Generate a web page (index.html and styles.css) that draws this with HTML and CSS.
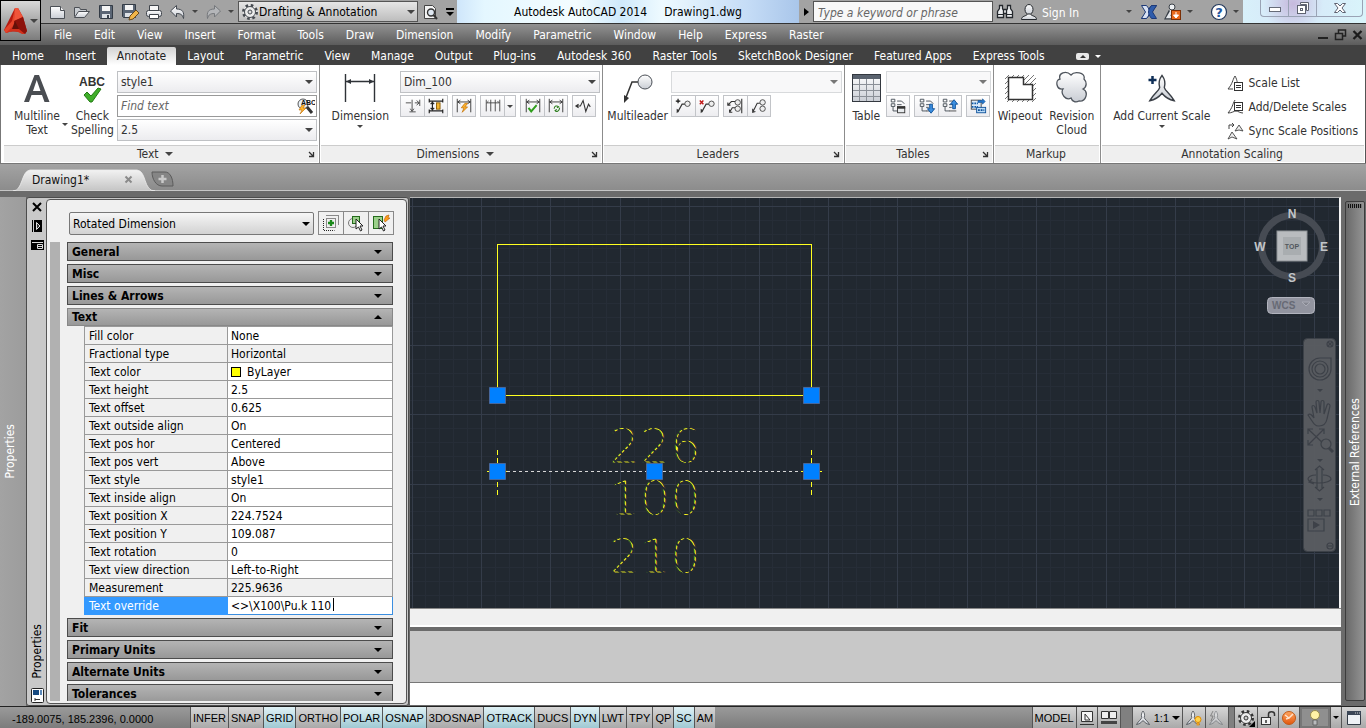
FILE: index.html
```html
<!DOCTYPE html>
<html lang="en">
<head>
<meta charset="utf-8">
<title>Autodesk AutoCAD 2014 - Drawing1.dwg</title>
<link rel="stylesheet" href="styles.css">
</head>
<body>
<svg class="defs" aria-hidden="true">
  <defs>
    <linearGradient id="silver" x1="0" y1="0" x2="0" y2="1"><stop offset="0" stop-color="#fff"/><stop offset="1" stop-color="#c9cdd4"/></linearGradient>
    <linearGradient id="orange" x1="0" y1="0" x2="0" y2="1"><stop offset="0" stop-color="#ffa763"/><stop offset="1" stop-color="#e2560c"/></linearGradient>
    <symbol id="dimbase" viewBox="0 0 20 20"><path d="M2.5 2v15M17.5 2v15M3 5.500h14M6 3.500L3 5.500l3 2M14 3.500l3 2-3 2" fill="none" stroke="#333"/></symbol>
    <symbol id="tree" viewBox="0 0 20 20"><path d="M2.500 2.500h4v3h-4zM2.500 7.500h4v3h-4zM9 4.500h5l3 3M4.500 11v4.500h5M9 8.500h5M9 11.500h3" fill="none" stroke="#444c55"/></symbol>
    <symbol id="scaleman" viewBox="0 0 32 32"><path d="M16 2c3 4 4 8 2.500 13 1 4 6 6 10.500 14-5-1-9-3-13-8-4 5-8 7-13 8 4.500-8 9.500-10 10.500-14C12 10 13 6 16 2z" fill="url(#silver)" stroke="#3a3f46" stroke-width="1.500"/></symbol>
  </defs>
</svg>

<header class="top">
  <button class="app" aria-label="Application menu">
    <svg width="26" height="28" viewBox="0 0 26 28"><path d="M12 1L1 23l2 3c6-2 14-2 19 1l2-3-4-14-5-9z" fill="#b51a10"/><path d="M12 1l-3 13-8 9 2 3 8-3z" fill="#e5432a"/><path d="M12 1l3 0 5 9-9 4z" fill="#f0543a"/><path d="M20 10l4 14-2 3-8-4-3-9z" fill="#8c120b"/><path d="M3 26l8-8 11 9-3 0c-4-3-10-4-16-1z" fill="#d2301c"/><path d="M9 22l3-8 4 8z" fill="#641009"/></svg>
    <i class="tri"></i>
  </button>
  <div class="titlebar">
    <button class="tb" aria-label="New"><svg width="18" height="16" viewBox="0 0 18 16"><path d="M1.500 2.500h10l4 4v8h-14z" fill="url(#silver)" stroke="#4b4f55"/><path d="M11.500 2.500v4h4" fill="#eee" stroke="#4b4f55"/></svg></button>
    <button class="tb" aria-label="Open"><svg width="18" height="16" viewBox="0 0 18 16"><path d="M1.500 12.500v-9h5l1 2h6v2" fill="#c9cdd2" stroke="#4b4f55"/><path d="M1.500 13.500l4-6h11l-5 6z" fill="url(#silver)" stroke="#4b4f55"/></svg></button>
    <button class="tb" aria-label="Save"><svg width="16" height="16" viewBox="0 0 16 16"><path d="M1.500 1.500h13v13h-12l-1-1z" fill="#5b6675" stroke="#333b45"/><path d="M4 2h8v5H4z" fill="#f4f4f4"/><path d="M4 10h8v4H4z" fill="#dde1e6"/><path d="M9 11h2v3H9z" fill="#3a434e"/></svg></button>
    <button class="tb" aria-label="Save as"><svg width="18" height="18" viewBox="0 0 18 18"><path d="M1.500 1.500h13v13h-12l-1-1z" fill="#5b6675" stroke="#333b45"/><path d="M4 2h8v5H4z" fill="#f4f4f4"/><path d="M4 10h8v4H4z" fill="#dde1e6"/><path d="M8 17l1-4 6-6 3 3-6 6z" fill="#f2b64a" stroke="#6a4a1c"/></svg></button>
    <button class="tb" aria-label="Plot"><svg width="18" height="16" viewBox="0 0 18 16"><path d="M4.500 1.500h9v5h-9z" fill="#f6f6f6" stroke="#40454c"/><rect x="1.500" y="6.500" width="15" height="6" rx="2" fill="url(#silver)" stroke="#40454c"/><path d="M4.500 10.500h9v4h-9z" fill="#fff" stroke="#40454c"/></svg></button>
    <button class="tb" aria-label="Undo"><svg width="18" height="16" viewBox="0 0 18 16"><path d="M1.500 7l6-5.500v3.500c6 0 8 3 7 9.500-1-4-3-5-7-5v3.500z" fill="url(#silver)" stroke="#444a52"/></svg></button>
    <button class="tb nar" aria-label="Undo list"><i class="tri s"></i></button>
    <button class="tb wide" aria-label="Redo"><svg width="18" height="16" viewBox="0 0 18 16"><path d="M16.500 7l-6-5.500v3.500c-6 0-8 3-7 9.500 1-4 3-5 7-5v3.500z" fill="#b4b6b9" stroke="#75787c"/></svg></button>
    <button class="tb nar" aria-label="Redo list"><i class="tri s"></i></button>
    <label class="workspace">
      <svg width="18" height="18" viewBox="0 0 18 18"><circle cx="9" cy="9" r="6.500" fill="#fff" stroke="#454a50" stroke-width="3" stroke-dasharray="2.500 2.600"/><circle cx="9" cy="9" r="5.500" fill="#ececec" stroke="#454a50"/><circle cx="9" cy="9" r="2" fill="#ddd" stroke="#454a50"/></svg>
      <select aria-label="Workspace"><option>Drafting &amp; Annotation</option></select><i class="tri"></i>
    </label>
    <button class="tb" aria-label="Plot preview"><svg width="16" height="16" viewBox="0 0 16 16"><path d="M2.500 1.500h8l3 3v10h-11z" fill="#f4f4f4" stroke="#444"/><circle cx="9" cy="8.500" r="3.500" fill="#dfe8f2" stroke="#333" stroke-width="1.400"/><path d="M11.500 11l3.500 4" stroke="#333" stroke-width="2"/></svg></button>
    <button class="tb more" aria-label="Customize"><b></b><i class="tri k"></i></button>
    <h1 class="title">Autodesk AutoCAD 2014&nbsp; &nbsp;&nbsp; Drawing1.dwg</h1>
    <button class="tb play" aria-label="Expand search"><i class="rtri"></i></button>
    <input class="search" type="text" placeholder="Type a keyword or phrase" aria-label="Search">
    <button class="tb" aria-label="Find"><svg width="18" height="18" viewBox="0 0 18 18"><path d="M3.500 2.500h3v3l1 2v7h-6v-6l2-3zM11.500 2.500h3v3l2 3v6h-6v-7l1-2zM7.500 6.500h3v4h-3z" fill="#eceef0" stroke="#24282d" stroke-width="1.300"/><path d="M1.500 11.500h6M10.500 11.500h6" stroke="#24282d"/></svg></button>
    <button class="tb" aria-label="Account"><svg width="18" height="18" viewBox="0 0 18 18"><ellipse cx="9" cy="6.500" rx="4" ry="5" fill="url(#silver)" stroke="#24282d"/><path d="M1.500 16.500c0-4 5-3 6-5.500h3c1 2.500 6 1.500 6 5.500z" fill="url(#silver)" stroke="#24282d"/></svg></button>
    <button class="signin">Sign In</button>
    <button class="tb nar" aria-label="Account menu"><i class="tri s"></i></button>
    <button class="tb" aria-label="Exchange Apps"><svg width="18" height="16" viewBox="0 0 18 16"><path d="M16.500 1.500h-5l-10 13h5z" fill="#2f5cab" stroke="#1e3a77"/><path d="M1.500 1.500h5c2 2.500 3 4.500 3 6.500s-1 4-3 6.500h-5L5.500 8z" fill="#d9e2f2" stroke="#1e3a77"/><path d="M16.500 1.500h-5C9.500 4 8.500 6 8.500 8s1 4 3 6.500h5L12.500 8z" fill="#2f5cab" stroke="#1e3a77"/></svg></button>
    <button class="tb" aria-label="Autodesk 360"><svg width="18" height="18" viewBox="0 0 18 18"><path d="M7 8L4 14h6" fill="none" stroke="#3a4048" stroke-width="5"/><path d="M7 5v4L4 14h6" fill="none" stroke="#e6e9ed" stroke-width="2.500"/><circle cx="8" cy="4" r="3" fill="#eef1f4" stroke="#3a4048"/><rect x="7.500" y="7.500" width="9" height="9" fill="#e8671a" stroke="#7a2f06"/><path d="M12 9v4M9.500 12h5L12 15z" fill="#fff" stroke="#fff"/></svg></button>
    <button class="tb nar" aria-label="Autodesk 360 menu"><i class="tri s"></i></button>
    <button class="tb help" aria-label="Help"><svg width="18" height="18" viewBox="0 0 18 18"><circle cx="9" cy="9" r="7.500" fill="#fff" stroke="#23395c" stroke-width="1.200"/><text x="9" y="13.500" text-anchor="middle" font-size="13" font-weight="bold" font-family="DejaVu Sans" fill="#23569e">?</text></svg></button>
    <button class="tb nar" aria-label="Help menu"><i class="tri s"></i></button>
    <div class="winctl">
      <button aria-label="Minimize"><svg width="14" height="12" viewBox="0 0 14 12"><rect x="1.500" y="5.500" width="11" height="4" fill="#fff" stroke="#666b78"/></svg></button>
      <button aria-label="Restore"><svg width="14" height="14" viewBox="0 0 14 14"><path d="M4.500 1.500h8v8h-2v-6h-6z" fill="#fff" stroke="#5e6270"/><rect x="1.500" y="4.500" width="8" height="8" fill="#fff" stroke="#5e6270"/><rect x="4.500" y="7.500" width="2" height="2" fill="none" stroke="#5e6270"/></svg></button>
      <button class="x" aria-label="Close"><svg width="14" height="12" viewBox="0 0 14 12"><path d="M1.500 1.500h3L7 4l2.500-2.500h3L9 6l3.500 4.500h-3L7 8l-2.500 2.500h-3L5 6z" fill="#fff" stroke="#5e6270"/></svg></button>
    </div>
  </div>
  <nav class="menubar">
    <button>File</button><button>Edit</button><button>View</button><button>Insert</button><button>Format</button><button>Tools</button><button>Draw</button><button>Dimension</button><button>Modify</button><button>Parametric</button><button>Window</button><button>Help</button><button>Express</button><button>Raster</button>
    <span class="docctl">
      <svg width="12" height="12" viewBox="0 0 12 12"><path d="M1 9h10" stroke="#222" stroke-width="2"/></svg>
      <svg width="13" height="12" viewBox="0 0 13 12"><path d="M4.500 4v-3h7v6h-3M1.500 4.500h7v6h-7z" fill="none" stroke="#222" stroke-width="1.500"/></svg>
      <svg width="11" height="12" viewBox="0 0 11 12"><path d="M1.500 2l8 8M9.500 2l-8 8" stroke="#1c1c1c" stroke-width="2.300"/></svg>
    </span>
  </nav>
</header>

<nav class="tabs">
  <button>Home</button><button>Insert</button><button class="on">Annotate</button><button>Layout</button><button>Parametric</button><button>View</button><button>Manage</button><button>Output</button><button>Plug-ins</button><button>Autodesk 360</button><button>Raster Tools</button><button>SketchBook Designer</button><button>Featured Apps</button><button>Express Tools</button>
  <button class="mini" aria-label="Minimize ribbon"><span></span><i class="tri s w"></i></button>
</nav>

<section class="ribbon">
  <div class="panel p-text">
    <div class="body">
      <button class="big"><svg width="28" height="34" viewBox="0 0 28 34"><path d="M1 31L11.500 4h4.500L26.500 31h-5L19 24H8.500L6 31zM10 20h7.500L13.700 9z" fill="#4a4d52"/></svg><span>Multiline<br>Text</span></button>
      <i class="tri s side"></i>
      <button class="big"><svg width="32" height="34" viewBox="0 0 32 34"><text x="16" y="15" text-anchor="middle" font-family="Liberation Sans" font-weight="bold" font-size="12" fill="#333">ABC</text><path d="M8 24l3-3 4 4 7-8 3 1-9 13h-2z" fill="#3fae29" stroke="#237a14"/></svg><span>Check<br>Spelling</span></button>
      <div class="stack">
        <label class="field"><select aria-label="Text style"><option>style1</option></select><i class="tri"></i></label>
        <label class="field find"><input type="text" placeholder="Find text" aria-label="Find text"><svg width="18" height="18" viewBox="0 0 18 18"><circle cx="6" cy="7" r="5" fill="#e9f1f8" stroke="#555"/><path d="M10 10l5 6" stroke="#333" stroke-width="3"/><path d="M5 8l-3 5h3l-2 4 6-6H6l2-3z" fill="#ffb52e" stroke="#c06c00" stroke-width=".6"/><text x="4" y="8" font-family="Liberation Sans" font-weight="bold" font-size="7" fill="#111">ABC</text></svg></label>
        <label class="field"><select aria-label="Text height"><option>2.5</option></select><i class="tri"></i></label>
      </div>
    </div>
    <div class="foot">Text <i class="tri"></i><svg class="launch" viewBox="0 0 7 7"><path d="M1 1l4 4M5.500 1v4.500H1" fill="none" stroke="#333" stroke-width="1.300"/></svg></div>
  </div>
  <div class="panel p-dim">
    <div class="body">
      <button class="big"><svg width="34" height="34" viewBox="0 0 34 34"><path d="M2.500 3v28M31.500 3v28M3 10.500h28" stroke="#2f3338" stroke-width="1.400"/><path d="M3 10.500l5-2.500v5zM31 10.500L26 8v5z" fill="#2f3338"/></svg><span>Dimension</span><i class="tri s"></i></button>
      <div class="stack">
        <label class="field"><select aria-label="Dimension style"><option>Dim_100</option></select><i class="tri"></i></label>
        <div class="tools">
          <span><button aria-label="Break"><svg viewBox="0 0 20 20"><path d="M2 6.500h6M9 3v12M12 6.500h5M17.500 3v7M6 16.500h7M7 13l2 3 2-3M14 4l3 2.500-3 2.500" fill="none" stroke="#444"/></svg></button><button aria-label="Adjust space"><svg viewBox="0 0 20 20"><path d="M2.500 2v4M17.500 2v4M2.500 14v4M17.500 14v4M3 4.500h14M3 15.500h14M6 6.500v7M4 8l2-2 2 2M4 12l2 2 2-2" fill="none" stroke="#222" stroke-width="1.300"/><rect x="10.500" y="6.500" width="4" height="7" fill="#f4b52e" stroke="#8a5a00"/></svg></button></span>
          <span><button aria-label="Quick dimension"><svg viewBox="0 0 20 20"><use href="#dimbase"/><path d="M11 7l-4 5h3l-2 5 6-6h-3l3-4z" fill="#ffb52e" stroke="#c06c00" stroke-width=".8"/></svg></button></span>
          <span><button aria-label="Continue"><svg viewBox="0 0 20 20"><path d="M2.500 3v13M7.500 3v13M12.500 3v13M17.500 3v13M3 6.500h14M3 6.500l2-2M17 6.500l-2-2" stroke="#444" fill="none"/></svg></button><button class="drop" aria-label="Continue options"><i class="tri s"></i></button></span>
          <span><button aria-label="Inspect"><svg viewBox="0 0 20 20"><use href="#dimbase"/><path d="M5 12l3 4 6-7" fill="none" stroke="#2f9e1c" stroke-width="2.200"/></svg></button><button aria-label="Update"><svg viewBox="0 0 20 20"><use href="#dimbase"/><path d="M8 13c0-3 3-4 5-2l-2 1M14 12c0 4-4 5-5 3l2-1" fill="none" stroke="#2b7d1c" stroke-width="1.200"/></svg></button></span>
          <span><button aria-label="Jogged"><svg viewBox="0 0 20 20"><path d="M2 10h4l3-6 3 12 3-8 2 3M4 8l-3 2 3 2" fill="none" stroke="#333" stroke-width="1.200"/></svg></button></span>
        </div>
      </div>
    </div>
    <div class="foot">Dimensions <i class="tri"></i><svg class="launch" viewBox="0 0 7 7"><path d="M1 1l4 4M5.500 1v4.500H1" fill="none" stroke="#333" stroke-width="1.300"/></svg></div>
  </div>
  <div class="panel p-lead">
    <div class="body">
      <button class="big"><svg width="34" height="34" viewBox="0 0 34 34"><path d="M4 29l7-18h6" fill="none" stroke="#333" stroke-width="1.500"/><path d="M3 32l0-8 5 3z" fill="#333"/><circle cx="24" cy="11" r="7" fill="url(#silver)" stroke="#4a4f56"/></svg><span>Multileader</span></button>
      <div class="stack">
        <label class="field pale"><select aria-label="Multileader style"><option></option></select><i class="tri"></i></label>
        <div class="tools">
          <span><button aria-label="Add leader"><svg viewBox="0 0 20 20"><path d="M4 17l5-9h4" fill="none" stroke="#333" stroke-width="1.300"/><path d="M3 18v-5l3 2z" fill="#333"/><circle cx="15" cy="7.500" r="3" fill="#eee" stroke="#444"/><path d="M4.500 2v5M2 4.500h5" stroke="#111" stroke-width="1.300"/></svg></button><button aria-label="Remove leader"><svg viewBox="0 0 20 20"><path d="M4 17l5-9h4" fill="none" stroke="#333" stroke-width="1.300"/><path d="M3 18v-5l3 2z" fill="#333"/><circle cx="15" cy="7.500" r="3" fill="#eee" stroke="#444"/><path d="M2 4l4 4M6 4l-4 4" stroke="#c01818" stroke-width="1.600"/></svg></button></span>
          <span><button aria-label="Align"><svg viewBox="0 0 20 20"><path d="M17.500 2v16M2 9l4-4h4M4 17l3-5h3M2 6v3h3M4 14v3h3" fill="none" stroke="#333" stroke-width="1.200"/><circle cx="13" cy="6" r="3" fill="#eee" stroke="#444"/><circle cx="13" cy="13" r="3" fill="#eee" stroke="#444"/></svg></button><button aria-label="Collect"><svg viewBox="0 0 20 20"><path d="M3 17l5-10h3M3 13v4l3-1" fill="none" stroke="#333" stroke-width="1.200"/><circle cx="14" cy="6" r="3" fill="#eee" stroke="#444"/><circle cx="14" cy="13" r="3" fill="#eee" stroke="#444"/></svg></button></span>
        </div>
      </div>
    </div>
    <div class="foot">Leaders<svg class="launch" viewBox="0 0 7 7"><path d="M1 1l4 4M5.500 1v4.500H1" fill="none" stroke="#333" stroke-width="1.300"/></svg></div>
  </div>
  <div class="panel p-tab">
    <div class="body">
      <button class="big"><svg width="32" height="34" viewBox="0 0 32 34"><rect x="2.500" y="3.500" width="28" height="27" fill="url(#silver)" stroke="#33383f"/><path d="M2 3h29v5H2z" fill="#59626e"/><path d="M9.500 8v22M16.500 8v22M23.500 8v22M3 13.500h27M3 19.500h27M3 25.500h27" stroke="#8b9097"/><rect x="2.500" y="3.500" width="28" height="27" fill="none" stroke="#33383f"/></svg><span>Table</span></button>
      <div class="stack">
        <label class="field pale"><select aria-label="Table style"><option></option></select><i class="tri"></i></label>
        <div class="tools">
          <span><button aria-label="Link data"><svg viewBox="0 0 20 20"><use href="#tree"/><rect x="9.500" y="10.500" width="8" height="7" fill="#e8ebee" stroke="#333"/><path d="M9 12h9" stroke="#333" stroke-width="2"/></svg></button></span>
          <span><button aria-label="Download"><svg viewBox="0 0 20 20"><use href="#tree"/><path d="M9 15.500h5" stroke="#444"/><path d="M13 8h3v5h2.500l-4 5-4-5H13z" fill="#3d8fe0" stroke="#0b4f99"/></svg></button><button aria-label="Upload"><svg viewBox="0 0 20 20"><use href="#tree"/><path d="M9 15.500h8" stroke="#444"/><path d="M13 13V8h-2.500l4-5 4 5H16v5z" fill="#3d8fe0" stroke="#0b4f99"/></svg></button></span>
          <span><button aria-label="Extract data"><svg viewBox="0 0 20 20"><rect x="2.500" y="3.500" width="11" height="10" fill="#dcebf9" stroke="#444"/><path d="M3 7h7M3 11h7" stroke="#0e5aa7" stroke-width="2" stroke-dasharray="2 1"/><path d="M10 4h5V2l3 3-3 3V6h-5z" fill="#2679cf" stroke="#0b4f99" stroke-width=".7"/><rect x="8.500" y="11.500" width="10" height="6" fill="#bcdcf7" stroke="#0b4f99"/><path d="M10 14.500h7" stroke="#0b4f99" stroke-width="2" stroke-dasharray="2 1"/></svg></button></span>
        </div>
      </div>
    </div>
    <div class="foot">Tables<svg class="launch" viewBox="0 0 7 7"><path d="M1 1l4 4M5.500 1v4.500H1" fill="none" stroke="#333" stroke-width="1.300"/></svg></div>
  </div>
  <div class="panel p-mark">
    <div class="body">
      <button class="big"><svg width="34" height="34" viewBox="0 0 34 34"><path d="M2 8l4-4M2 13l9-9M2 18L16 4M2 23L21 4M2 28L26 4M4 31L31 4M9 31L33 7M14 31l19-19M19 31l14-14M24 31l9-9M29 31l4-4" stroke="#777"/><path d="M5.500 6.500h15v7h9v15h-24z" fill="#fff" stroke="#333" stroke-width="1.500"/></svg><span>Wipeout</span></button>
      <button class="big"><svg width="34" height="34" viewBox="0 0 34 34"><path d="M8 18C1 19 0 9 5 8 3 2 11-1 16 4c3-4 15-3 13 4 3 3 3 8-1 10 6 3 3 13-4 12-4 2-7 0-8-3-5 3-11-4-8-9z" fill="url(#silver)" stroke="#50565e" stroke-width="1.300"/></svg><span>Revision<br>Cloud</span></button>
    </div>
    <div class="foot">Markup</div>
  </div>
  <div class="panel p-anno">
    <div class="body">
      <button class="big"><svg width="34" height="34" viewBox="0 0 34 34"><use href="#scaleman" x="2" y="2" width="30" height="31"/><path d="M7.500 5v8M3.500 9h8" stroke="#0f2f57" stroke-width="2.500"/></svg><span>Add Current Scale</span><i class="tri s"></i></button>
      <div class="list">
        <button><svg width="17" height="17" viewBox="0 0 17 17"><path d="M8 1c3 5 1 7 5 9M8 1C5 6 6 8 1 14h5" fill="none" stroke="#444"/><rect x="7.500" y="7.500" width="8" height="8" fill="#fff" stroke="#333"/><path d="M9 10.500h5M9 12.500h5" stroke="#333"/></svg>Scale List</button>
        <button><svg width="17" height="17" viewBox="0 0 17 17"><path d="M8 1C5 6 6 8 1 14c4 0 6-2 8-2s4 2 7 2" fill="none" stroke="#444"/><rect x="7.500" y="3.500" width="8" height="8" fill="#fff" stroke="#333"/><path d="M9 6.500h5M9 8.500h5" stroke="#333"/></svg>Add/Delete Scales</button>
        <button><svg width="17" height="17" viewBox="0 0 17 17"><path d="M12 2l-4 6 4-1 4 1zM5 9l-4 7 4-2 5 2z" fill="#eee" stroke="#444" stroke-width=".9"/><path d="M2 6V2h5M5 0l2 2-2 2" fill="none" stroke="#444"/></svg>Sync Scale Positions</button>
      </div>
    </div>
    <div class="foot">Annotation Scaling</div>
  </div>
</section>

<div class="filetabs">
  <svg width="180" height="26" viewBox="0 0 180 26"><defs><linearGradient id="tabg" x1="0" y1="0" x2="0" y2="1"><stop offset="0" stop-color="#f2f2f2"/><stop offset="1" stop-color="#c4c4c4"/></linearGradient></defs><path d="M13 26c10 0 8-20 17-21h107c10 1 6 21 18 21z" fill="url(#tabg)" stroke="#eee" stroke-width=".8"/><path d="M152 7h13c5 0 8 6 8 14h-11c-6 0-10-7-10-14z" fill="#858585" stroke="#5c5c5c"/><path d="M162.500 10v8M158.500 14h8" stroke="#c9c9c9" stroke-width="2.500"/></svg>
  <a href="#d1">Drawing1*</a>
  <button aria-label="Close drawing"><svg width="9" height="9" viewBox="0 0 9 9"><path d="M1.500 1.500l6 6M7.500 1.500l-6 6" stroke="#8a8a8a" stroke-width="2"/></svg></button>
</div>

<main class="main">
  <aside class="dock-left"><span>Properties</span></aside>
  <aside class="palette">
    <div class="grip">
      <svg width="12" height="12" viewBox="0 0 12 12"><path d="M2 2l8 8M10 2l-8 8" stroke="#000" stroke-width="2"/></svg>
      <svg width="12" height="12" viewBox="0 0 12 12"><path d="M1 0h1v12H1zM3 0h8v12H3z"/><path d="M5.500 2.500v7l3.500-3.500z" fill="#333" stroke="#ddd"/></svg>
      <svg width="13" height="12" viewBox="0 0 13 12"><path d="M0 1h13v10H0z"/><path d="M1 3.500h11M6.500 5.500h5v4h-5zM7 7.500h4" fill="none" stroke="#ddd"/></svg>
      <span>Properties</span>
      <svg width="13" height="15" viewBox="0 0 13 15"><rect x=".5" y=".5" width="12" height="14" rx="1" fill="#fff" stroke="#222"/><path d="M2 2h6v5H2z" fill="#174a80"/><path d="M9 2h2v5H9z" fill="#5b89ba"/><path d="M4 11.500h5M4 10v3" stroke="#333"/></svg>
    </div>
    <div class="sheet">
      <div class="pick">
        <label class="objsel"><select aria-label="Object type"><option>Rotated Dimension</option></select><i class="tri k"></i></label>
        <div class="picks">
          <button aria-label="Toggle PICKADD"><svg width="18" height="18" viewBox="0 0 18 18"><path d="M4.500 1.500h12v10M1.500 5v11.500h11M4.500 4.500h9v9h-9z" fill="none" stroke="#222" stroke-dasharray="1 1"/><path d="M9 6v6M6 9h6" stroke="#1b8a1b" stroke-width="2.300"/></svg></button>
          <button aria-label="Select objects"><svg width="18" height="18" viewBox="0 0 18 18"><circle cx="6" cy="9" r="4.500" fill="none" stroke="#777"/><rect x="5.500" y="2.500" width="7" height="7" fill="#9bd08a" stroke="#246b1c"/><path d="M9 5v10l2.500-2 2 4 1.500-1-2-4h3z" fill="#fff" stroke="#222"/></svg></button>
          <button aria-label="Quick select"><svg width="18" height="18" viewBox="0 0 18 18"><rect x="1.500" y="2.500" width="9" height="12" fill="#9bd08a" stroke="#246b1c"/><path d="M12 6l2-4 3-1-1 3h2l-5 4z" fill="#ff9d1c" stroke="#b35c00" stroke-width=".6"/><path d="M7 5v10l2.500-2 2 4 1.500-1-2-4h3z" fill="#fff" stroke="#222"/></svg></button>
        </div>
      </div>
      <div class="props">
        <div class="scroll"></div>
        <div class="cats">
          <button class="cat">General<i class="tri k"></i></button>
          <button class="cat">Misc<i class="tri k"></i></button>
          <button class="cat">Lines &amp; Arrows<i class="tri k"></i></button>
          <div class="group">
            <button class="cat open">Text<i class="tri up"></i></button>
            <table>
              <tr><th>Fill color</th><td>None</td></tr>
              <tr class="ro"><th>Fractional type</th><td>Horizontal</td></tr>
              <tr><th>Text color</th><td><b class="sw"></b>ByLayer</td></tr>
              <tr><th>Text height</th><td>2.5</td></tr>
              <tr><th>Text offset</th><td>0.625</td></tr>
              <tr><th>Text outside align</th><td>On</td></tr>
              <tr><th>Text pos hor</th><td>Centered</td></tr>
              <tr><th>Text pos vert</th><td>Above</td></tr>
              <tr><th>Text style</th><td>style1</td></tr>
              <tr><th>Text inside align</th><td>On</td></tr>
              <tr><th>Text position X</th><td>224.7524</td></tr>
              <tr><th>Text position Y</th><td>109.087</td></tr>
              <tr><th>Text rotation</th><td>0</td></tr>
              <tr><th>Text view direction</th><td>Left-to-Right</td></tr>
              <tr class="ro"><th>Measurement</th><td>225.9636</td></tr>
              <tr class="sel"><th><label for="ovr">Text override</label></th><td><input id="ovr" type="text" value="&lt;&gt;\X100\Pu.k 110"><i class="caret"></i></td></tr>
            </table>
          </div>
          <button class="cat">Fit<i class="tri k"></i></button>
          <button class="cat">Primary Units<i class="tri k"></i></button>
          <button class="cat">Alternate Units<i class="tri k"></i></button>
          <button class="cat">Tolerances<i class="tri k"></i></button>
        </div>
      </div>
    </div>
  </aside>
  <div class="work">
    <div class="canvas" id="d1">
      <svg class="drawing" width="100%" height="100%">
        <defs>
          <pattern id="grid" patternUnits="userSpaceOnUse" x="71" y="8" width="347" height="347">
            <path d="M14.500 0v347M28.500 0v347M42.500 0v347M56.500 0v347M83.500 0v347M97.500 0v347M111.500 0v347M125.500 0v347M153.500 0v347M167.500 0v347M180.500 0v347M194.500 0v347M222.500 0v347M236.500 0v347M250.500 0v347M264.500 0v347M291.500 0v347M305.500 0v347M319.500 0v347M333.500 0v347M0 14.500h347M0 28.500h347M0 42.500h347M0 56.500h347M0 83.500h347M0 97.500h347M0 111.500h347M0 125.500h347M0 153.500h347M0 167.500h347M0 180.500h347M0 194.500h347M0 222.500h347M0 236.500h347M0 250.500h347M0 264.500h347M0 291.500h347M0 305.500h347M0 319.500h347M0 333.500h347" stroke="#262d37"/>
            <path d="M.5 0v347M69.500 0v347M139.500 0v347M208.500 0v347M278.500 0v347M0 .5h347M0 69.500h347M0 139.500h347M0 208.500h347M0 278.500h347" stroke="#343c49"/>
          </pattern>
          <pattern id="dash" patternUnits="userSpaceOnUse" width="5" height="5" patternTransform="rotate(-45)"><rect width="3" height="5" fill="#ffff20"/></pattern>
        </defs>
        <rect width="100%" height="100%" fill="#212830"/>
        <rect width="100%" height="100%" fill="url(#grid)"/>
        <rect x="87.500" y="46.500" width="314" height="151" fill="none" stroke="#ffff20"/>
        <path d="M87.500 252v45M401.500 252v45" stroke="#ffff20" stroke-dasharray="5 3"/>
        <path d="M77 273.500h20M391 273.500h22" stroke="#ffff20" stroke-dasharray="5 3"/>
        <path d="M97 273.500h294" stroke="#d8d8d8" stroke-dasharray="3 3"/>
        <g class="dimtext"><text x="245" y="265">226</text><text x="245" y="317">100</text><text x="245" y="375">210</text></g>
        <g fill="#0080ff" stroke="#47679b"><path d="M79.500 189.500h16v16h-16zM393.500 189.500h16v16h-16zM79.500 265.500h16v16h-16zM236.500 265.500h16v16h-16zM393.500 265.500h16v16h-16z"/></g>
      </svg>
      <svg class="cube" width="80" height="110" viewBox="0 0 80 110">
        <circle cx="40" cy="40" r="30.500" fill="none" stroke="#464b53" stroke-width="7"/>
        <g font-family="Liberation Sans" font-weight="bold" font-size="12" fill="#c3c6c9" text-anchor="middle"><text x="40" y="12">N</text><text x="72" y="45">E</text><text x="40" y="76">S</text><text x="8" y="45">W</text></g>
        <rect x="25" y="25" width="30" height="30" fill="#b9bcbf" stroke="#8f9397"/><rect x="31" y="31" width="18" height="18" fill="#a9adb0"/>
        <text x="40" y="43" text-anchor="middle" font-family="Liberation Sans" font-weight="bold" font-size="7" fill="#52575d">TOP</text>
        <rect x="15.500" y="91.500" width="47" height="16" rx="4" fill="#92949f" stroke="#b2b4be"/>
        <text x="20" y="103" font-family="Liberation Sans" font-weight="bold" font-size="10" fill="#676a75">WCS</text>
        <path d="M50 96h8l-4 4z" fill="#83858f" stroke="#a9abb5"/>
      </svg>
      <svg class="nav" width="33" height="214" viewBox="0 0 33 214">
        <rect x=".5" y=".5" width="32" height="213" rx="4" fill="#5a5d62" stroke="#3e434a"/>
        <g fill="none" stroke="#3f434a" stroke-width="1.200">
          <circle cx="27" cy="6" r="3"/><path d="M25 4l4 4M29 4l-4 4"/>
          <path d="M6 31c0-6 5-11 11-11h11v11a11 11 0 0 1-22 0z"/><circle cx="17" cy="31" r="5"/><circle cx="17" cy="31" r="8"/>
          <path d="M5 77c2-2 4 0 6 3l-2-11c0-2 2-2 3 0l2 6-1-11c0-2 3-2 3 0l1 11 1-11c0-2 3-2 3 0v12l3-9c1-2 3-1 3 1l-3 13c-1 5-4 7-8 7-5 0-6-4-11-11z"/>
          <path d="M5 91l18 17M21 91L5 107M5 96v-5h5M16 91h5v5M5 102v5h5"/><circle cx="23" cy="106" r="5" fill="#5a5d62"/><path d="M26 110l4 4" stroke-width="3"/>
          <path d="M14 131v19M19 131v19M12 132l4.500-4 4.500 4M12 149l4.500 4 4.500-4"/><path d="M20 137c5 0 8 2 8 4s-5 4-12 4-11-2-11-4 3-4 8-4M9 141l-3 3 5 2"/>
          <path d="M5 172h6v6H5zM13 172h6v6h-6zM21 172h6v6h-6zM5 181h16v12H5z"/><circle cx="27" cy="208" r="3"/><path d="M25 208h4"/>
        </g>
        <path d="M10 183v8l7-4zM14 51h6l-3 3zM14 121h6l-3 3zM14 160h6l-3 3z" fill="#3f434a"/>
      </svg>
    </div>
    <div class="layoutbar"></div>
    <div class="history"></div>
    <div class="cmd"><input type="text" aria-label="Command line"></div>
  </div>
  <aside class="dock-right"><i></i><span>External References</span></aside>
</main>

<footer class="status">
  <output>-189.0075, 185.2396, 0.0000</output>
  <div class="toggles">
    <button>INFER</button><button>SNAP</button><button class="on">GRID</button><button>ORTHO</button><button class="on">POLAR</button><button class="on">OSNAP</button><button>3DOSNAP</button><button class="on">OTRACK</button><button>DUCS</button><button class="on">DYN</button><button>LWT</button><button>TPY</button><button>QP</button><button class="on">SC</button><button>AM</button>
  </div>
  <div class="right">
    <button>MODEL</button>
    <button aria-label="Quick view layouts"><svg width="16" height="16" viewBox="0 0 16 16"><path d="M2.500 1.500h11v10h-11z" fill="#f4f4f4" stroke="#333"/><path d="M1 14.500h14M6 4v6h5z" fill="none" stroke="#333"/></svg></button>
    <button aria-label="Quick view drawings"><svg width="18" height="16" viewBox="0 0 18 16"><path d="M1.500 1.500h7v7h-7zM9.500 1.500h7v7h-7z" fill="#eee" stroke="#333"/><path d="M1 12.500h16" stroke="#444" stroke-width="3"/></svg></button>
    <i class="gap"></i>
    <button class="scale"><svg width="16" height="16" viewBox="0 0 32 32"><use href="#scaleman"/></svg>1:1<i class="tri k"></i></button>
    <button aria-label="Annotation visibility"><svg width="18" height="16" viewBox="0 0 36 32"><use href="#scaleman" width="32" height="32"/><circle cx="26" cy="19" r="6" fill="#ffd24a" stroke="#e08a00" stroke-width="2"/><path d="M23 26h6v5h-6z" fill="#e79b21"/></svg></button>
    <button aria-label="Auto scale"><svg width="18" height="16" viewBox="0 0 36 32" opacity=".5"><use href="#scaleman" width="32" height="32"/><path d="M10 2L5 12h5L6 22" fill="none" stroke="#444" stroke-width="2"/></svg></button>
    <i class="gap sm"></i>
    <button aria-label="Workspace switching"><svg width="18" height="18" viewBox="0 0 18 18"><circle cx="9" cy="9" r="6.500" fill="#fff" stroke="#333" stroke-width="3" stroke-dasharray="2.500 2.600"/><circle cx="9" cy="9" r="5.500" fill="#ececec" stroke="#333"/><circle cx="9" cy="9" r="2" fill="#ccc" stroke="#333"/><path d="M18 12v6h-6z"/></svg></button>
    <button aria-label="Lock UI"><svg width="16" height="16" viewBox="0 0 16 16"><path d="M8.500 7V4c0-3 6-3 6 0v2" fill="none" stroke="#333" stroke-width="1.500"/><rect x="1.500" y="7.500" width="9" height="7" fill="#f2f2f2" stroke="#333"/><path d="M6 10v3" stroke="#333" stroke-width="1.500"/></svg></button>
    <button aria-label="Performance"><svg width="16" height="16" viewBox="0 0 16 16"><circle cx="8" cy="8" r="6.500" fill="url(#orange)" stroke="#c05a18"/><path d="M4 5l4 3 4-4M5 9l3-1" stroke="#ffe2cc" stroke-width="1.500" fill="none"/></svg></button>
    <button class="bulb" aria-label="Isolate objects"><svg width="22" height="17" viewBox="0 0 22 17"><circle cx="11" cy="6" r="4.500" fill="#fff3a6" stroke="#9a8e4e"/><path d="M9 11h4v5H9z" fill="#b9bbbd" stroke="#555" stroke-width=".8"/></svg></button>
    <button class="menu" aria-label="Status menu"><i class="tri s k"></i></button>
    <button aria-label="Clean screen"><svg width="16" height="16" viewBox="0 0 16 16"><path d="M1.500 1.500h13v13h-13z" fill="#eef1f5" stroke="#333b46"/><path d="M1 1h14v4H1z" fill="#3b4656"/><path d="M9 3h5" stroke="#ccc" stroke-dasharray="1 1"/></svg></button>
  </div>
</footer>
</body>
</html>
```

FILE: styles.css
```css
* { box-sizing: border-box; }
html, body { height: 100%; }
body {
  margin: 0;
  display: flex;
  flex-direction: column;
  overflow: hidden;
  background: #6b6b6b;
  color: #000;
  font: 12px/14px "DejaVu Sans Condensed", "Noto Sans", sans-serif;
}
button, input, select {
  margin: 0;
  padding: 0;
  border: 0;
  border-radius: 0;
  background: none;
  color: inherit;
  font: inherit;
  appearance: none;
  outline: none;
}
svg { display: block; flex: none; }
.defs { position: absolute; width: 0; height: 0; }

.tri {
  flex: none;
  width: 0;
  height: 0;
  border: 4px solid transparent;
  border-top-color: #444;
  border-bottom: 0;
}
.tri.s { border-width: 3px 3px 0; }
.tri.k { border-top-color: #000; }
.tri.w { border-top-color: #fff; }
.tri.up { border: 4px solid transparent; border-top: 0; border-bottom-color: #000; }
.rtri { border: 4px solid transparent; border-left: 5px solid #000; border-right: 0; }

/* title and menu */
.top {
  flex: none;
  display: grid;
  grid-template: 24px 21px / 46px 1fr;
  background: linear-gradient(#a3a3a3 0 23px, #333 23px 24px, #929292 24px, #5c5c5c 45px);
}
.app {
  grid-row: 1 / 3;
  width: 41px;
  height: 41px;
  display: flex;
  align-items: center;
  justify-content: center;
  gap: 1px;
  border: 1px solid #000;
  background: linear-gradient(#d8d8d8, #7c7c7c);
}
.titlebar { display: flex; align-items: center; height: 23px; min-width: 0; }
.tb { width: 24px; height: 22px; flex: none; display: flex; align-items: center; justify-content: center; }
.tb.nar { width: 10px; }
.tb.wide { width: 26px; }
.tb.more { width: 15px; flex-direction: column; gap: 2px; }
.tb.more b { width: 8px; height: 2px; background: #000; }
.tb.play { width: 14px; }
.tb.help { margin-left: 12px; }
.workspace {
  position: relative;
  flex: none;
  display: flex;
  align-items: center;
  width: 180px;
  height: 21px;
  margin-left: 2px;
  padding-left: 2px;
  border: 1px solid #555;
  background: linear-gradient(#e6e6e6, #bdbdbd);
}
.workspace select { flex: 1; height: 19px; }
.workspace .tri { position: absolute; right: 2px; top: 8px; pointer-events: none; }
.title {
  flex: 1;
  height: 23px;
  margin: 0;
  text-align: center;
  font: inherit;
  line-height: 25px;
  white-space: pre;
  background: linear-gradient(90deg, #cfe6fb, #e4f7ff 8%, #f4fdff 35%, #cfe9fb 48%, #eefaff 60%, #c5dcf6 85%, #a9c6ea);
}
.search {
  width: 180px;
  height: 21px;
  padding: 2px 0 0 4px;
  border: 1px solid #555;
  background: #f8f8f8;
}
.search::placeholder, .find input::placeholder { color: #666; font-style: italic; opacity: 1; }
.signin { width: 83px; text-align: left; color: #fff; padding: 2px 0 0 1px; }
.signin + .tb { margin-right: 3px; }
.winctl {
  flex: none;
  display: flex;
  width: 123px;
  height: 23px;
  margin-left: 2px;
  padding: 0 3px 6px 17px;
  background: radial-gradient(circle at 50px 4px, #c6b9dd, #d7ecf9 30px, #d9f5fb);
}
.winctl button {
  width: 28px;
  display: flex;
  align-items: center;
  justify-content: center;
  border: 1px solid #9aa3b5;
  border-top: 0;
  border-right: 0;
}
.winctl .x { width: 47px; border-right: 1px solid #9aa3b5; border-radius: 0 0 4px 0; }
.winctl button:first-child { border-radius: 0 0 0 4px; }
.menubar { display: flex; align-items: center; gap: 22px; padding: 0 3px 0 8px; color: #fff; }
.docctl { margin-left: auto; display: flex; gap: 5px; }

/* ribbon tabs */
.tabs { flex: none; display: flex; gap: 1px; height: 20px; padding-left: 2px; background: #414141; color: #fff; }
.tabs button { padding: 2px 10px 0; height: 20px; white-space: nowrap; }
.tabs .on { margin: 2px 0 0; height: 18px; padding: 0 10px; border-radius: 2px 2px 0 0; color: #222; background: linear-gradient(#d2d2d2, #fff); }
.tabs .mini { display: flex; align-items: center; gap: 6px; margin-left: 10px; }
.tabs .mini span { width: 13px; height: 7px; border-radius: 2px; background: #e8e8e8; position: relative; }
.tabs .mini span::after { content: ""; position: absolute; left: 4px; top: 2px; border: 3px solid transparent; border-top: 0; border-bottom-color: #333; }

/* ribbon */
.ribbon { flex: none; display: flex; height: 99px; padding-left: 2px; background: #fff; border-left: 1px solid #777; border-bottom: 1px solid #777; color: #333; }
.panel { display: flex; flex-direction: column; min-width: 0; border-right: 1px solid #8c8c8c; }
.panel:last-child { border-right-color: #555; }
.p-text { flex: 317 1 0; }
.p-dim { flex: 284 1 0; }
.p-lead { flex: 242 1 0; }
.p-tab { flex: 148 1 0; }
.p-mark { flex: 107 1 0; }
.p-anno { flex: 265 1 0; }
.body { flex: 1; display: flex; align-items: flex-start; padding: 6px 2px 0 4px; }
.foot {
  position: relative;
  height: 17px;
  margin: 0 1px 1px;
  display: flex;
  align-items: center;
  justify-content: center;
  gap: 6px;
  padding-right: 12px;
  background: #efefef;
  border-top: 1px solid #ccc;
}
.p-mark .foot, .p-anno .foot { padding-right: 2px; }
.launch { position: absolute; right: 3px; top: 5px; width: 7px; height: 7px; }
.big { flex: none; display: flex; flex-direction: column; align-items: center; line-height: 14px; }
.big svg { margin-bottom: 4px; }
.big .tri { margin-top: 2px; }
.side { margin: 52px 3px 0 2px; }
.p-text .body { padding-left: 11px; }
.stack { flex: 1; min-width: 0; display: flex; flex-direction: column; gap: 2px; }
.p-text .stack { margin-left: 3px; }
.field {
  position: relative;
  display: flex;
  align-items: center;
  height: 22px;
  border: 1px solid #bfc1c4;
  background: linear-gradient(#fff, #ececef);
}
.field select, .field input { flex: 1; width: 100%; height: 20px; padding-left: 3px; }
.field .tri { position: absolute; right: 3px; top: 8px; pointer-events: none; }
.field.find { background: #fff; border-color: #999; }
.field.find svg { margin-right: 1px; }
.field.pale { border-color: #d8dadc; background: #f8f8f9; }
.field.pale .tri { border-top-color: #777; }
.tools { display: flex; gap: 4px; }
.tools span { display: flex; border: 1px solid #c2c4c8; }
.tools button { width: 23px; height: 20px; display: flex; align-items: center; justify-content: center; background: linear-gradient(#fff, #ededf0); }
.tools button:only-child { width: 22px; }
.tools button + button { border-left: 1px solid #c2c4c8; }
.tools button.drop { width: 11px; }
.tools svg { width: 20px; height: 18px; }
.p-dim .body { padding-left: 12px; }
.p-dim .stack { margin-left: 11px; }
.p-lead .body { padding-left: 4px; }
.p-lead .stack { margin-left: 3px; }
.p-tab .body { padding-left: 5px; }
.p-tab .stack { margin-left: 4px; }
.p-mark .body { gap: 7px; padding-left: 4px; }
.p-anno .body { padding-left: 12px; }
.list { margin-left: 17px; }
.list button { display: flex; align-items: center; gap: 4px; height: 24px; white-space: nowrap; }

/* drawing tabs */
.filetabs { position: relative; flex: none; height: 27px; background: linear-gradient(#a3a3a3, #8c8c8c); border-bottom: 1px solid #c6c6c6; }
.filetabs > svg { position: absolute; left: 0; top: 1px; }
.filetabs a { position: absolute; left: 32px; top: 9px; color: #111; text-decoration: none; }
.filetabs button { position: absolute; left: 124px; top: 11px; }

/* workspace */
.main { flex: 1; min-height: 0; display: flex; padding-top: 6px; }
.dock-left { position: relative; flex: none; width: 26px; background: linear-gradient(90deg, #a3a3a3, #9c9c9c); color: #fff; }
.dock-left span, .dock-right span, .grip span { writing-mode: vertical-rl; transform: rotate(180deg); white-space: nowrap; }
.dock-left span { position: absolute; left: 3px; top: 227px; }
.palette {
  flex: none;
  display: flex;
  width: 383px;
  padding: 1px;
  border: 1px solid #4c4c4c;
  border-radius: 3px;
  background: #c9c9c9;
}
.grip { width: 18px; flex: none; display: flex; flex-direction: column; align-items: center; gap: 7px; padding: 2px 0 1px; }
.grip span { margin-top: auto; margin-bottom: 2px; }
.sheet { flex: 1; min-width: 0; display: flex; flex-direction: column; padding: 11px 12px 2px 3px; border: 1px solid #555; border-radius: 4px; background: #f0f0f0; }
.pick { display: flex; align-items: center; gap: 4px; padding-left: 19px; height: 24px; }
.objsel { position: relative; flex: 1; display: flex; height: 23px; border: 1px solid #777; border-radius: 2px; background: linear-gradient(#f6f6f6, #d2d2d2); }
.objsel select { width: 100%; padding: 2px 0 0 3px; }
.objsel .tri { position: absolute; right: 3px; top: 9px; pointer-events: none; }
.picks { display: flex; border: 1px solid #888; }
.picks button { width: 24px; height: 22px; display: flex; align-items: center; justify-content: center; }
.picks button + button { width: 25px; border-left: 1px solid #888; }
.props { flex: 1; min-height: 0; display: flex; gap: 7px; padding: 7px 1px 0 0; }
.scroll { width: 10px; background: #b1b1b1; }
.cats { flex: 1; min-width: 0; display: flex; flex-direction: column; gap: 3px; overflow: hidden; }
.cat {
  flex: none;
  display: flex;
  width: 100%;
  height: 19px;
  align-items: center;
  justify-content: space-between;
  padding: 0 10px 0 4px;
  border: 1px solid #4c4c4c;
  background: linear-gradient(#b4b4b4, #989898);
  font-weight: bold;
}
.cat.open { height: 18px; border-color: #888; }
table { width: calc(100% - 17px); margin-left: 17px; border-collapse: collapse; table-layout: fixed; }
th, td { height: 18px; padding: 0 0 0 4px; border: 1px solid #999; text-align: left; font-weight: normal; white-space: nowrap; }
th { width: 143px; background: #f0f0f0; }
td { padding-left: 3px; background: #fff; }
.ro td { background: #f0f0f0; }
.sw { display: inline-block; width: 10px; height: 10px; margin-right: 6px; border: 1px solid #000; background: #ff0; vertical-align: -1px; }
.sel th { background: #3399ff; color: #fff; border-color: #3399ff; }
.sel td { position: relative; border-color: #3a8ee0; }
.sel input { display: block; width: 100%; height: 14px; }
.caret { position: absolute; left: 105px; top: 1px; width: 1px; height: 13px; background: #000; }
.work { flex: 1; min-width: 0; display: flex; flex-direction: column; padding-left: 1px; }
.canvas { position: relative; flex: 1; min-height: 0; overflow: hidden; border-top: 1px solid #b5b5b5; border-right: 2px solid #f4f4f4; background: #212830; }
.dimtext text {
  font-family: "DejaVu Sans Light", "DejaVu Sans", sans-serif;
  font-weight: 200;
  font-size: 48px;
  text-anchor: middle;
  fill: url(#dash);
  stroke: #212830;
  stroke-width: 1px;
}
.cube { position: absolute; right: 7px; top: 8px; }
.nav { position: absolute; right: 3px; top: 140px; opacity: .95; }
.layoutbar { height: 19px; background: #f0f0f0; border-top: 1px solid #888; border-bottom: 2px solid #fff; }
.history { height: 56px; border-top: 4px solid #6b6b6b; background: #c8c8c8; border-bottom: 1px solid #777; }
.cmd { height: 22px; background: #fff; margin-bottom: 1px; }
.cmd input { width: 100%; height: 22px; }
.dock-right {
  flex: none;
  display: flex;
  flex-direction: column;
  align-items: center;
  width: 20px;
  margin: 4px 1px 5px 4px;
  border: 1px solid #3c3c3c;
  border-radius: 2px;
  background: linear-gradient(90deg, #6a6a6a, #949494);
  color: #fff;
}
.dock-right i { width: 14px; height: 4px; margin-top: 2px; background: repeating-linear-gradient(90deg, #111 0 1px, #777 1px 2px); }
.dock-right span { margin-top: 190px; }

/* status bar */
.status {
  flex: none;
  display: flex;
  height: 22px;
  border-top: 1px solid #222;
  background: linear-gradient(#9a9a9a, #7c7c7c);
  font: 11px/14px "Liberation Sans", Arial, sans-serif;
}
.status output { width: 190px; padding: 5px 0 0 12px; }
.toggles, .right { display: flex; }
.right { margin-left: auto; }
.status button { display: flex; align-items: center; justify-content: center; gap: 3px; padding: 0 2px; border-left: 1px solid #555; background: linear-gradient(#d6d6d6, #a9a9a9); }
.status .on { background: linear-gradient(#dff1f5, #9fc9d3); }
.status .gap { width: 12px; border-left: 1px solid #555; background: #808080; }
.status .gap.sm { width: 6px; }
.status .bulb { width: 31px; background: #8f8f8f; box-shadow: inset 0 0 0 2px #777; }
.status .menu { width: 11px; }
.status .right > button:last-child { padding: 0 4px; }
```
